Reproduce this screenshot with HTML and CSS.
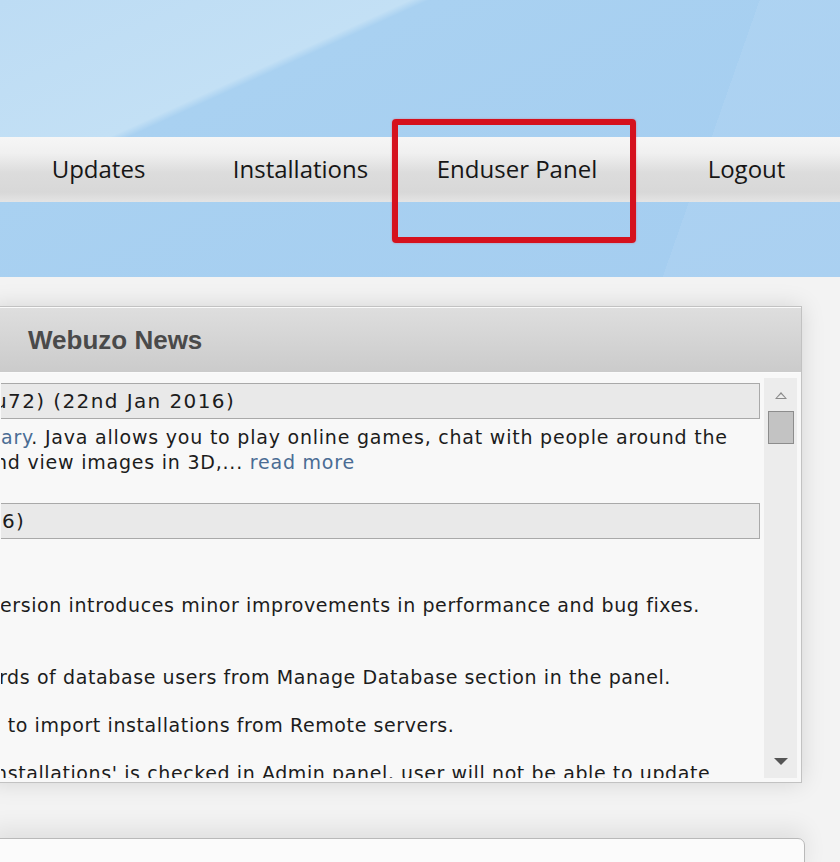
FILE: index.html
```html
<!DOCTYPE html>
<html lang="en">
<head>
    <meta charset="UTF-8">
    <meta name="viewport" content="width=device-width, initial-scale=1.0">
    <title>Webuzo</title>
    <link rel="stylesheet" href="styles.css">
</head>
<body>
    <!-- header with menu -->
    <div class="top">
        <ul class="menu">
            <li>Updates</li>
            <li>Installations</li>
            <li>Enduser Panel</li>
            <li>Logout</li>
        </ul>
    </div>
    <div class="mark"></div>

    <div class="main">
        <div class="panel">
            <div class="panel-head">Webuzo News</div>
            <div class="panel-body">
                <div class="news">
                    <div class="item">
                        <div class="item-head"><span class="cut-u">u72) (22nd Jan 2016)</span></div>
                        <div class="item-text wide">
                            <p><a href="#">ary</a>. Java allows you to play online games, chat with people around the</p>
                            <p><span class="cut-n">nd view images in 3D,... <a href="#">read more</a></span></p>
                        </div>
                    </div>
                    <div class="item">
                        <div class="item-head">6)</div>
                        <div class="item-text gap">
                            <p class="first"><span class="cut-e">ersion introduces minor improvements in performance and bug fixes.</span></p>
                            <p><span class="cut-r">rds of database users from Manage Database section in the panel.</span></p>
                            <p>&nbsp;to import installations from Remote servers.</p>
                            <p><span class="cut-n">nstallations' is checked in Admin panel, user will not be able to update</span></p>
                        </div>
                    </div>
                </div>
                <!-- scroll bar -->
                <div class="bar">
                    <span class="up"></span>
                    <span class="thumb"></span>
                    <span class="down"></span>
                </div>
            </div>
        </div>
        <div class="next"></div>
    </div>
</body>
</html>
```

FILE: styles.css
```css
*{
    margin: 0;
    padding: 0;
    box-sizing: border-box;
}
body{
    background: #f3f3f3;
    overflow: hidden;
    position: relative;
    font-family: "DejaVu Sans", Verdana, sans-serif;
}
.top{
    height: 277px;
    padding-top: 137px;
    background:
        linear-gradient(109.3deg, rgba(255,255,255,0) 717px, rgba(255,255,255,.07) 717px),
        linear-gradient(155.5deg, #bddcf4 0, #c3e0f5 170px, #a9d1f1 178px, #a4cdf0 100%);
}
.menu{
    list-style: none;
    display: flex;
    height: 65px;
    align-items: center;
    background: linear-gradient(#f6f6f6 0%, #f0f0f0 25%, #dcdcdc 55%, #d8d8d8 85%, #e4e4e4 100%);
    font-family: "Open Sans", sans-serif;
    font-size: 24px;
    color: #161616;
}
.menu li{
    flex-shrink: 0;
    text-align: center;
    padding-bottom: 3px;
}
.menu li:nth-child(1){ width: 197px; }
.menu li:nth-child(2){ width: 207px; }
.menu li:nth-child(3){ width: 226px; }
.menu li:nth-child(4){ width: 233px; }

/* red frame over the menu */
.mark{
    position: absolute;
    left: 392px;
    top: 119px;
    width: 244px;
    height: 124px;
    border: 6px solid #d5111d;
    border-radius: 4px;
    box-shadow: 0 0 2px rgba(230,60,70,.5);
}

.main{
    padding-top: 29px;
}
.panel{
    margin-left: -10px;
    width: 812px;
    border: 1px solid #c2c2c2;
    background: #f8f8f8;
    box-shadow: 0 0 22px rgba(0,0,0,.13);
}
.panel-head{
    height: 66px;
    padding-left: 37px;
    border-top: 1px solid #fafafa;
    border-bottom: 1px solid #fbfbfb;
    background: linear-gradient(#dedede, #cbcbcb);
    font-family: "Liberation Sans", Arial, sans-serif;
    font-weight: bold;
    font-size: 26px;
    line-height: 64px;
    color: #4a4a4a;
}
.panel-body{
    display: flex;
    height: 409px;
    padding: 5px 4px 4px 10px;
    gap: 4px;
}
.news{
    flex: 1;
    overflow: hidden;
    padding-top: 5px;
    white-space: nowrap;
}
.item{
    margin-left: -4px;
    margin-bottom: 29px;
}
.item-head{
    height: 36px;
    border: 1px solid #a9a9a9;
    background: #e9e9e9;
    padding-left: 4px;
    font-size: 20px;
    letter-spacing: 1.4px;
    line-height: 34px;
    color: #1c1c1c;
}
.item-text{
    padding: 6px 0 0 4px;
    font-size: 19px;
    line-height: 24.5px;
    letter-spacing: .6px;
    color: #1c1c1c;
}
.item-text.wide{
    letter-spacing: .78px;
}
.item-text a{
    color: #4a6c94;
    text-decoration: none;
}
.item-text.gap{
    padding-top: 54px;
    line-height: 24px;
}
.item-text.gap p{
    margin-bottom: 24px;
}
.item-text.gap p.first{
    margin-bottom: 48px;
}
.cut-u{ margin-left: -8px; }
.cut-n{ margin-left: -6px; }
.cut-e{ margin-left: -1px; }
.cut-r{ margin-left: -2px; }

.bar{
    width: 33px;
    background: #ececec;
    display: flex;
    flex-direction: column;
    align-items: center;
    padding-top: 14px;
}
.up{
    width: 0;
    height: 0;
    border-left: 6px solid transparent;
    border-right: 6px solid transparent;
    border-bottom: 7px solid #8a8a8a;
    position: relative;
}
.up::after{
    content: "";
    position: absolute;
    left: -4px;
    top: 2px;
    border-left: 4px solid transparent;
    border-right: 4px solid transparent;
    border-bottom: 4px solid #ececec;
}
.thumb{
    margin-top: 12px;
    width: 26px;
    height: 33px;
    background: #c3c3c3;
    border: 1px solid #8c8c8c;
    margin-left: 1px;
}
.down{
    margin-top: auto;
    margin-bottom: 13px;
    width: 0;
    height: 0;
    border-left: 7px solid transparent;
    border-right: 7px solid transparent;
    border-top: 7px solid #555;
}
.next{
    margin-top: 55px;
    margin-left: -10px;
    width: 815px;
    height: 40px;
    background: #fbfbfb;
    border: 1px solid #b9b9b9;
    border-radius: 0 7px 0 0;
    box-shadow: 0 -10px 22px rgba(0,0,0,.08);
}
```
